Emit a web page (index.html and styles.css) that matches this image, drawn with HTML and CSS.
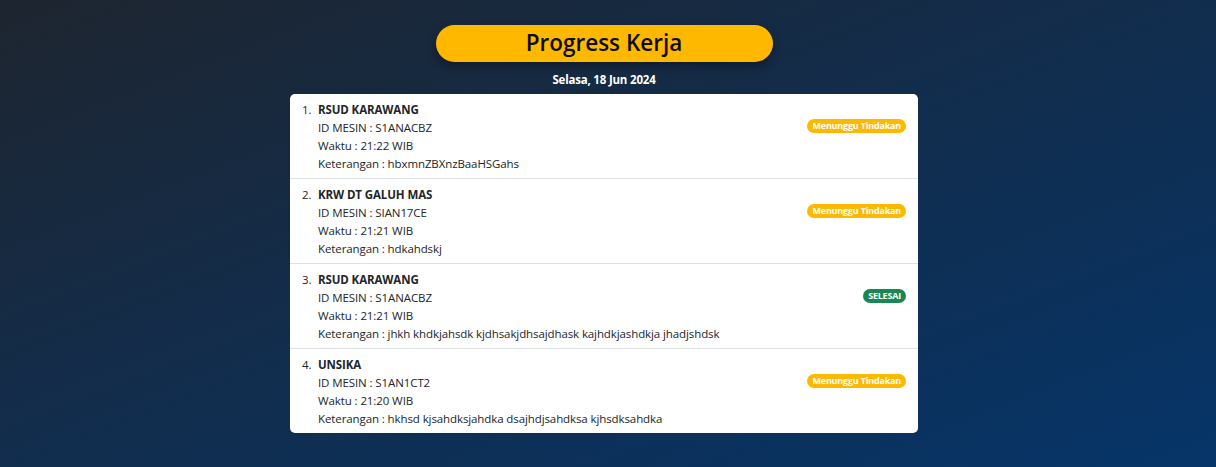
FILE: index.html
```html
<!DOCTYPE html>
<html lang="id">
<head>
<meta charset="utf-8">
<title>Progress Kerja</title>
<link rel="stylesheet" href="styles.css">
</head>
<body>
<main class="page">
  <h1 class="title">Progress Kerja</h1>
  <div class="date">Selasa, 18 Jun 2024</div>
  <ol class="list">
    <li class="item">
      <span class="num">1.</span>
      <div class="info">
        <div class="name">RSUD KARAWANG</div>
        <div>ID MESIN : S1ANACBZ</div>
        <div>Waktu : 21:22 WIB</div>
        <div>Keterangan : hbxmnZBXnzBaaHSGahs</div>
      </div>
      <span class="badge badge-wait">Menunggu Tindakan</span>
    </li>
    <li class="item">
      <span class="num">2.</span>
      <div class="info">
        <div class="name">KRW DT GALUH MAS</div>
        <div>ID MESIN : SIAN17CE</div>
        <div>Waktu : 21:21 WIB</div>
        <div>Keterangan : hdkahdskj</div>
      </div>
      <span class="badge badge-wait">Menunggu Tindakan</span>
    </li>
    <li class="item">
      <span class="num">3.</span>
      <div class="info">
        <div class="name">RSUD KARAWANG</div>
        <div>ID MESIN : S1ANACBZ</div>
        <div>Waktu : 21:21 WIB</div>
        <div>Keterangan : jhkh khdkjahsdk kjdhsakjdhsajdhask kajhdkjashdkja jhadjshdsk</div>
      </div>
      <span class="badge badge-done">SELESAI</span>
    </li>
    <li class="item">
      <span class="num">4.</span>
      <div class="info">
        <div class="name">UNSIKA</div>
        <div>ID MESIN : S1AN1CT2</div>
        <div>Waktu : 21:20 WIB</div>
        <div>Keterangan : hkhsd kjsahdksjahdka dsajhdjsahdksa kjhsdksahdka</div>
      </div>
      <span class="badge badge-wait">Menunggu Tindakan</span>
    </li>
  </ol>
</main>
</body>
</html>
```

FILE: styles.css
```css
* { box-sizing: border-box; }
html, body { height: 100%; }
body {
  margin: 0;
  background: linear-gradient(to bottom right, #1e2530 0%, #112d4d 50%, #063569 100%);
  font-family: "Open Sans", "Noto Sans", sans-serif;
  color: #212529;
}
.page {
  width: 1208px;
  padding-top: 25px;
  display: flex;
  flex-direction: column;
  align-items: center;
}
.title {
  margin: 0;
  width: 337px;
  height: 37px;
  background: #ffb800;
  border-radius: 19px;
  box-shadow: 0 4px 10px rgba(0, 0, 0, 0.35);
  font-size: 22.5px;
  font-weight: 600;
  line-height: 36px;
  text-align: center;
  color: #0d0d0d;
}
.date {
  margin-top: 10px;
  height: 22px;
  font-size: 11.5px;
  font-weight: 700;
  letter-spacing: -0.2px;
  color: #fff;
  line-height: 16px;
}
.list {
  list-style: none;
  margin: 0;
  padding: 0;
  width: 628px;
  background: #fff;
  border-radius: 5px;
  overflow: hidden;
}
.item {
  display: flex;
  align-items: flex-start;
  padding: 7px 12px 5px 12px;
  border-top: 1px solid #dee2e6;
  font-size: 11.5px;
  letter-spacing: -0.1px;
  line-height: 18px;
}
.item:first-child { border-top: 0; }
.num { width: 16px; flex: none; }
.info { flex: 1; }
.name { font-weight: 700; }
.badge {
  margin-top: 18px;
  height: 14px;
  padding: 0 5px;
  border-radius: 7px;
  font-size: 9px;
  font-weight: 700;
  letter-spacing: -0.2px;
  line-height: 14px;
  color: #fff;
  white-space: nowrap;
}
.badge-wait { background: #ffb800; }
.badge-done { background: #198754; }
```
